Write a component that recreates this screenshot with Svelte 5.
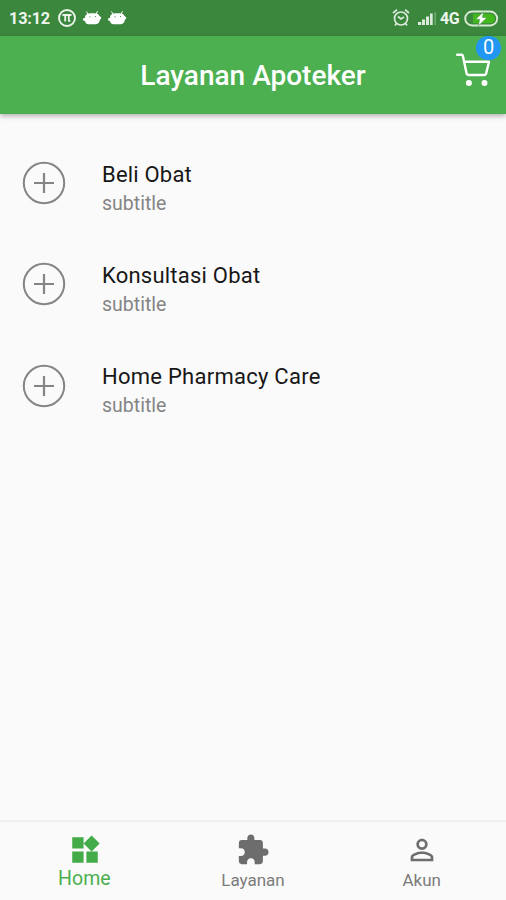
<script>
  const services = [
    { name: 'Beli Obat', spacing: 0.2 },
    { name: 'Konsultasi Obat', spacing: 0.22 },
    { name: 'Home Pharmacy Care', spacing: 0.26 }
  ];
</script>

<div class="screen">
  <div class="status">
    <span class="time">13:12</span>
    <svg class="pi" width="20" height="20" viewBox="0 0 20 20">
      <circle cx="10" cy="10" r="8" fill="none" stroke="#edf5ed" stroke-width="1.9" />
      <path d="M5.5 7h9M8.2 7v6.500M11.800 7v5.200q0 1 1.500 1" fill="none" stroke="#edf5ed" stroke-width="1.800" />
    </svg>
    {#each [0, 1] as n}
      <svg class="droid" width="20" height="16" viewBox="0 0 20 16">
        <path d="M4.500 1.500l1.500 2.500M15.500 1.200L14.300 4" stroke="#fff" stroke-width="1" />
        <path d="M3.200 6Q4.500 3.300 8.500 3.200h4q4 .1 5 2.800l1.700 1.300q.4 1.500-1.300 2.500Q17.500 13.500 14 14.300H6.500Q3.300 13.800 3 11L1.200 10.500Q.5 8.500 1.800 8L3 7.900z" fill="#fff" />
        <circle cx="8" cy="6.800" r=".6" fill="#3b873e" /><circle cx="13.500" cy="6.500" r=".6" fill="#3b873e" />
      </svg>
    {/each}
    <svg class="alarm" width="20" height="20" viewBox="0 0 20 20" fill="none" stroke="#dcebdc" stroke-width="1.700">
      <circle cx="10" cy="10.500" r="6.500" /><path d="M2 5l4-3.300M14 1.700L18 5M5.500 15.500L4 17.500M14.500 15.500l1.500 2M7 8.500l3 2.500 3-2" />
    </svg>
    <svg class="signal" width="19" height="16" viewBox="0 0 19 16">
      <path d="M0 14v-3h3.200v3zM4 14V8.500h3V14zM8 14V5.500h3V14zM12 14V2.500h2.700V14z" fill="#dcebdc" />
      <path d="M16.500 14V1H18v13z" fill="#72a974" />
    </svg>
    <span class="network">4G</span>
    <svg class="battery" width="35" height="18" viewBox="0 0 35 18">
      <rect x="1.200" y="1.500" width="32" height="14" rx="7" fill="#3b873e" stroke="#d8e9d4" stroke-width="1.900" />
      <path d="M9 3.700h17a4.800 4.800 0 0 1 0 9.600H9z" fill="#43b81c" />
      <path d="M19.500 2L11.500 9.300h4l-1 6.500 8.500-8.300h-4.500z" fill="#fff" stroke="#3b873e" stroke-width=".5" />
    </svg>
  </div>

  <header>
    <h1>Layanan Apoteker</h1>
    <svg class="cart" width="38" height="36" viewBox="0 0 38 36">
      <path d="M3.200 3.700h4.200q1.200 0 1.500 1.400L12.500 22q.4 2 2.200 2h15.300q1.800 0 2.200-1.800L35 10.800H10.100" fill="none" stroke="#fff" stroke-width="2.400" stroke-linejoin="round" stroke-linecap="round" />
      <circle cx="14.900" cy="32" r="3" fill="#fff" /><circle cx="30.500" cy="32" r="3" fill="#fff" />
    </svg>
    <span class="badge">0</span>
  </header>

  <main>
    {#each services as service}
      <div class="row">
        <svg width="44" height="44" viewBox="0 0 44 44" fill="none" stroke="#858585">
          <circle cx="22" cy="22" r="20.200" stroke-width="2" /><path d="M22 12v20M12 22h20" stroke-width="2.200" />
        </svg>
        <div class="text">
          <div class="name" style:letter-spacing="{service.spacing}px">{service.name}</div>
          <div class="sub">subtitle</div>
        </div>
      </div>
    {/each}
  </main>

  <nav>
    <div class="tab active">
      <svg width="34" height="34" viewBox="0 0 24 24" fill="#43ab47"><path d="M13 13v8h8v-8h-8zM3 21h8v-8H3v8zM3 3v8h8V3H3zm13.660-1.310L11 7.340 16.660 13l5.660-5.660-5.660-5.650z" /></svg>
      <span>Home</span>
    </div>
    <div class="tab">
      <svg width="34" height="34" viewBox="0 0 24 24" fill="#6d6d6d"><path d="M20.500 11H19V7c0-1.100-.9-2-2-2h-4V3.500C13 2.120 11.880 1 10.500 1S8 2.120 8 3.500V5H4c-1.100 0-1.990.9-1.990 2v3.800H3.500c1.490 0 2.700 1.210 2.700 2.700s-1.210 2.700-2.700 2.700H2V20c0 1.100.9 2 2 2h3.800v-1.500c0-1.490 1.210-2.700 2.700-2.700 1.490 0 2.700 1.210 2.700 2.700V22H17c1.100 0 2-.9 2-2v-4h1.500c1.380 0 2.500-1.120 2.500-2.500S21.880 11 20.500 11z" /></svg>
      <span>Layanan</span>
    </div>
    <div class="tab">
      <svg width="34" height="34" viewBox="0 0 24 24" fill="#6d6d6d"><path d="M12 5.900a2.100 2.100 0 1 1 0 4.200 2.100 2.100 0 0 1 0-4.200m0 9c2.970 0 6.100 1.460 6.100 2.100v1.100H5.900V17c0-.64 3.130-2.100 6.100-2.100M12 4C9.790 4 8 5.790 8 8s1.790 4 4 4 4-1.790 4-4-1.790-4-4-4zm0 9c-2.670 0-8 1.340-8 4v3h16v-3c0-2.660-5.330-4-8-4z" /></svg>
      <span>Akun</span>
    </div>
  </nav>
</div>

<style>
  :global(body) { margin: 0; }
  .screen { width: 506px; height: 900px; display: flex; flex-direction: column; background: #fafafa; font-family: Roboto, sans-serif; overflow: hidden; }
  svg { display: block; flex: none; }
  .status { height: 36px; flex: none; box-sizing: border-box; padding: 1px 7px 0 9px; background: #3b873e; color: #edf5ed; display: flex; align-items: center; }
  .time { font-size: 16.300px; font-weight: 700; width: 48px; letter-spacing: -.2px; }
  .pi { margin-top: -1px; }
  .droid { margin-left: 5px; margin-top: -1px; }
  .alarm { margin-left: auto; margin-top: -1px; }
  .signal { margin-left: 7px; }
  .network { width: 24px; margin-left: 3px; font-size: 16px; font-weight: 700; letter-spacing: -.5px; }
  header { height: 78px; flex: none; background: #4caf50; position: relative; display: flex; justify-content: center; align-items: center; box-shadow: 0 2px 5px rgba(0,0,0,.3); }
  h1 { margin: 2px 0 0; color: #fff; font-size: 28px; line-height: 36px; font-weight: 500; white-space: nowrap; }
  .cart { position: absolute; left: 454px; top: 15px; }
  .badge { position: absolute; left: 476px; top: 0; width: 25px; height: 24px; border-radius: 12px; background: #2196f3; color: #fff; font-size: 20px; line-height: 23px; text-align: center; }
  main { flex: 1; padding-top: 18.400px; }
  .row { height: 101.300px; display: flex; align-items: center; padding-left: 22px; box-sizing: border-box; }
  .text { margin-left: 36px; padding-top: 11.400px; }
  .name { font-size: 22px; line-height: 29px; color: #171717; white-space: nowrap; }
  .sub { font-size: 19.500px; line-height: 29px; color: #858585; }
  nav { height: 80px; flex: none; box-sizing: border-box; border-top: 2px solid #f0f0f0; display: flex; }
  .tab { flex: 1; display: flex; flex-direction: column; align-items: center; padding-top: 11px; color: #7c7c7c; font-size: 17px; line-height: 24px; }
  .tab span { margin-top: 1px; }
  .tab.active { color: #4caf50; font-size: 19.500px; }
  .tab.active svg { margin-left: 1px; }
  .tab.active span { margin-top: 0; }
</style>
